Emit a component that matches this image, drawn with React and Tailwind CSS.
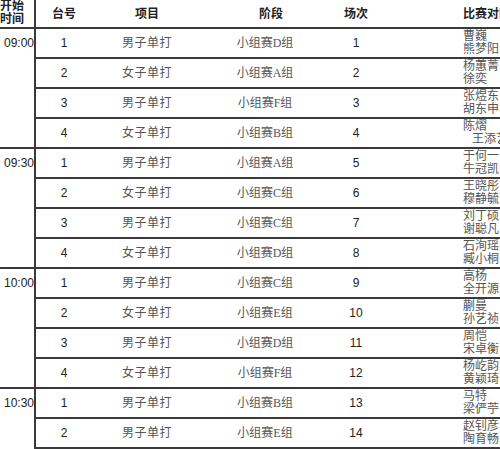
import React from "react";

const groups = [
  {
    time: "09:00",
    rows: [
      ["1", "男子单打", "小组赛D组", "1", "曹巍", "熊梦阳"],
      ["2", "女子单打", "小组赛A组", "2", "杨蕙菁", "徐奕"],
      ["3", "男子单打", "小组赛F组", "3", "张煜东", "胡东申"],
      ["4", "女子单打", "小组赛B组", "4", "陈熠", "王添艺"],
    ],
  },
  {
    time: "09:30",
    rows: [
      ["1", "男子单打", "小组赛A组", "5", "于何一", "牛冠凯"],
      ["2", "女子单打", "小组赛C组", "6", "王晓彤", "穆静毓"],
      ["3", "男子单打", "小组赛C组", "7", "刘丁硕", "谢聪凡"],
      ["4", "女子单打", "小组赛D组", "8", "石洵瑶", "臧小桐"],
    ],
  },
  {
    time: "10:00",
    rows: [
      ["1", "男子单打", "小组赛C组", "9", "高杨", "全开源"],
      ["2", "女子单打", "小组赛E组", "10", "蒯曼", "孙艺祯"],
      ["3", "男子单打", "小组赛D组", "11", "周恺", "宋卓衡"],
      ["4", "女子单打", "小组赛F组", "12", "杨屹韵", "黄颖琦"],
    ],
  },
  {
    time: "10:30",
    last: true,
    rows: [
      ["1", "男子单打", "小组赛B组", "13", "马特", "梁俨苧"],
      ["2", "男子单打", "小组赛E组", "14", "赵钊彦", "陶育畅"],
    ],
  },
];

const cols = "grid grid-cols-[56px_110px_126px_56px_79px_1fr]";
const sans = "font-['Liberation_Sans','Noto_Sans_CJK_SC',sans-serif]";
const serif = "font-['Liberation_Serif','Noto_Sans_CJK_SC',serif]";

function Row({ r }) {
  return (
    <div className={`${cols} h-[30px] items-center border-b-2 border-[#3a3a3a]`}>
      <span className={`${sans} text-center text-[12px] text-[#222]`}>{r[0]}</span>
      <span className={`${serif} text-center text-[12px] text-[#555] tracking-[0.5px]`}>{r[1]}</span>
      <span className={`${serif} text-center text-[12px] text-[#555]`}>{r[2]}</span>
      <span className={`${sans} text-center text-[12px] text-[#222]`}>{r[3]}</span>
      <span />
      <div className={`${serif} flex flex-col text-[12px] leading-[13px] text-[#555] whitespace-nowrap`}>
        <span>{r[4]}</span>
        <span className={r[5] === "王添艺" ? "pl-[9px]" : ""}>{r[5]}</span>
      </div>
    </div>
  );
}

export default function App() {
  return (
    <div className="w-[500px] h-[449px] overflow-hidden bg-white">
      <div className="flex h-[29px] border-b-2 border-[#3a3a3a]">
        <div className={`${sans} w-[36px] shrink-0 border-r-2 border-[#3a3a3a] text-[12px] font-bold leading-[13px] text-[#222] pt-[0px]`}>
          <div>开始</div>
          <div>时间</div>
        </div>
        <div className={`${cols} flex-1 items-center ${sans} text-[12px] font-bold text-[#222]`}>
          <span className="text-center">台号</span>
          <span className="text-center">项目</span>
          <span className="text-center pl-[12px]">阶段</span>
          <span className="text-center">场次</span>
          <span />
          <span className="whitespace-nowrap">比赛对阵</span>
        </div>
      </div>
      {groups.map((g) => (
        <div key={g.time} className="flex">
          <div
            className={`w-[36px] shrink-0 border-r-2 border-[#3a3a3a] ${
              g.last ? "" : "border-b-2"
            }`}
          >
            <div className={`${sans} h-[28px] flex items-center pl-[4px] text-[12px] text-[#222]`}>
              {g.time}
            </div>
          </div>
          <div className="flex-1">
            {g.rows.map((r) => (
              <Row key={r[3]} r={r} />
            ))}
          </div>
        </div>
      ))}
    </div>
  );
}
